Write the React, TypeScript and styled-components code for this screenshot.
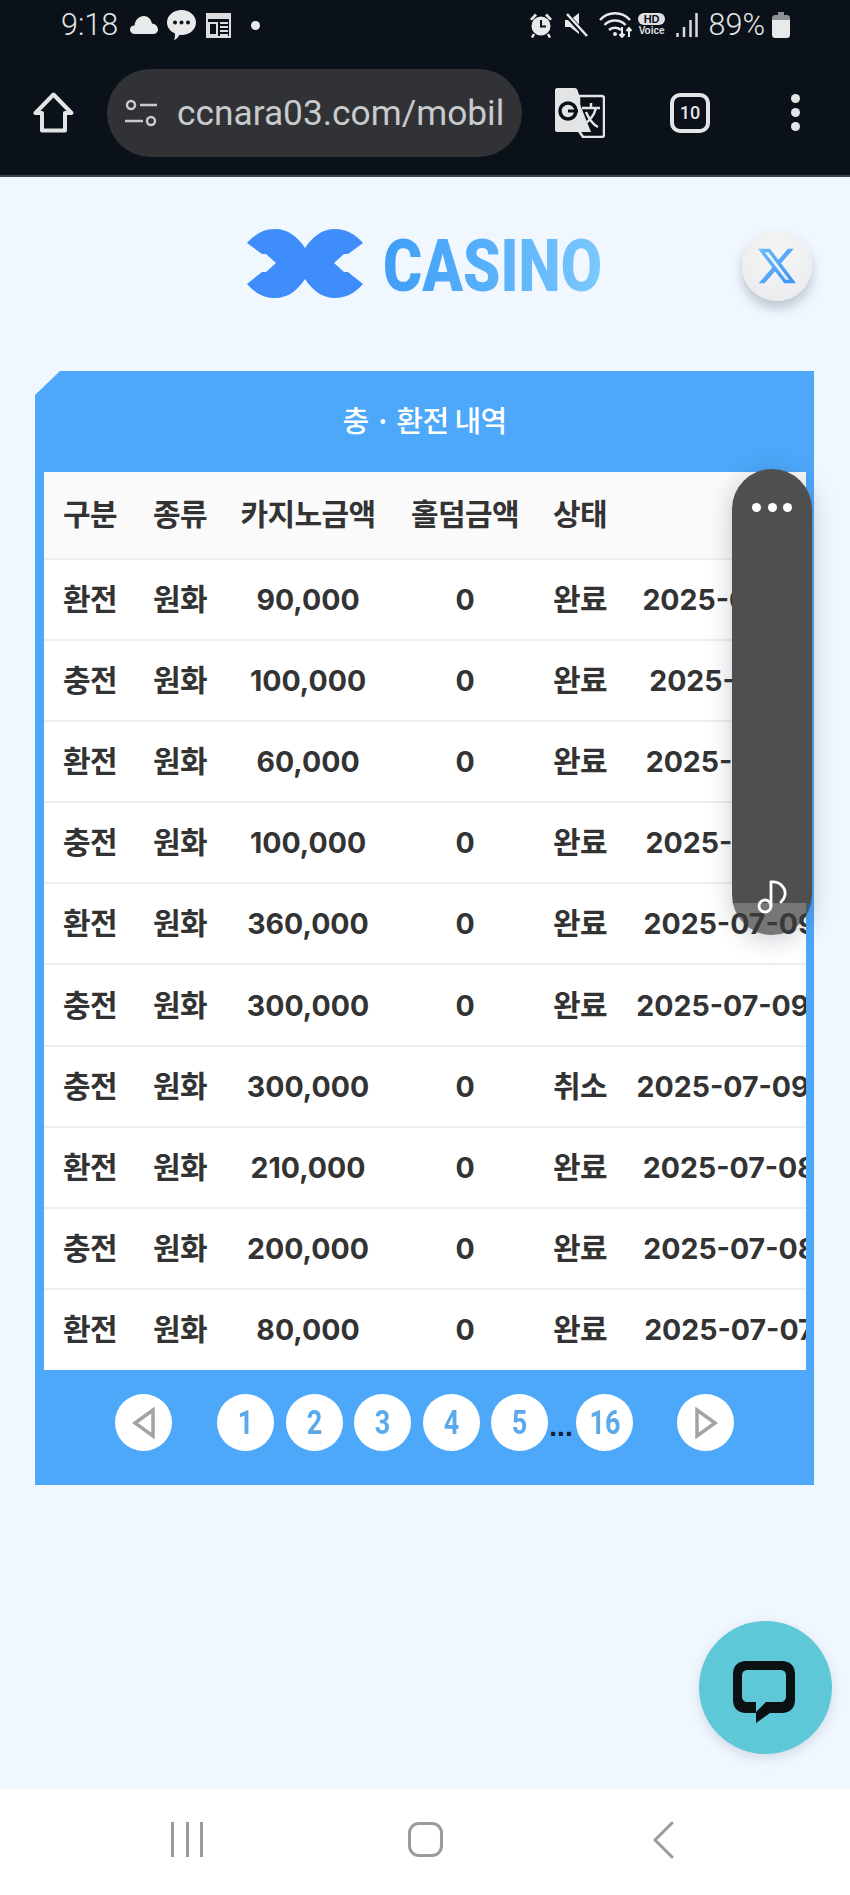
import React from "react";
import styled, { createGlobalStyle } from "styled-components";

const GlobalStyle = createGlobalStyle`
  html, body {
    margin: 0;
    padding: 0;
    background: #f1f7ff;
  }
  * {
    box-sizing: border-box;
  }
`;

const Screen = styled.div`
  position: relative;
  width: 850px;
  height: 1895px;
  overflow: hidden;
  display: flex;
  flex-direction: column;
  font-family: Inter, "Noto Sans CJK KR", sans-serif;
  background: #f1f7ff;
`;

const TopBars = styled.header`
  height: 177px;
  flex: none;
  background: #0b1119;
  border-bottom: 2px solid #3a4250;
  color: #e8e9ea;
`;

const StatusBar = styled.div`
  height: 50px;
  display: flex;
  align-items: center;
  justify-content: space-between;
  padding: 0 60px 0 61px;
`;

const StatusGroup = styled.div`
  display: flex;
  align-items: center;
  gap: ${(p: { $gap: number }) => p.$gap}px;
`;

const StatusText = styled.span`
  font-family: Roboto, sans-serif;
  font-weight: 300;
  font-size: 30.5px;
  line-height: 40px;
  color: #e4e5e6;
`;

const StatusDot = styled.span`
  width: 9px;
  height: 9px;
  margin-left: 8px;
  border-radius: 50%;
  background: #e8e9ea;
`;

const VoiceBadge = styled.div`
  width: 28px;
  display: flex;
  flex-direction: column;
  align-items: center;
  font-family: "Liberation Sans", sans-serif;
  font-weight: 700;
  color: #dfe0e1;
`;

const HdChip = styled.span`
  width: 27px;
  height: 12px;
  border-radius: 6px;
  background: #dfe0e1;
  color: #0b1119;
  font-size: 11px;
  line-height: 12px;
  text-align: center;
`;

const VoiceText = styled.span`
  font-size: 10px;
  line-height: 12px;
`;

const ToolBar = styled.div`
  height: 125px;
  display: flex;
  align-items: center;
  padding: 0 0 0 33px;
`;

const UrlPill = styled.div`
  width: 415px;
  height: 88px;
  margin-left: 33px;
  padding-left: 18px;
  display: flex;
  align-items: center;
  gap: 19px;
  border-radius: 44px;
  background: #303236;
`;

const UrlText = styled.span`
  font-family: Roboto, sans-serif;
  font-size: 35.3px;
  color: #c9cacc;
  white-space: nowrap;
`;

const TabCount = styled.div`
  width: 40px;
  height: 40px;
  margin-left: 65px;
  border: 4px solid #e3e4e6;
  border-radius: 10px;
  display: flex;
  align-items: center;
  justify-content: center;
  font-family: Roboto, sans-serif;
  font-weight: 500;
  font-size: 18px;
  color: #e3e4e6;
`;

const MoreDots = styled.div`
  margin-left: 81px;
  display: flex;
  flex-direction: column;
  gap: 5px;
`;

const MoreDot = styled.span`
  width: 9px;
  height: 9px;
  border-radius: 50%;
  background: #e3e4e6;
`;

const Page = styled.main`
  flex: 1;
  display: flex;
  flex-direction: column;
  padding-top: 52px;
`;

const LogoRow = styled.div`
  height: 70px;
  margin-bottom: 72px;
  display: flex;
  align-items: center;
  justify-content: center;
  gap: 19px;
  padding-right: 2px;
`;

const LogoMark = styled.svg`
  filter: blur(0.5px);
`;

const LogoWord = styled.span`
  display: inline-block;
  margin: 4px -48px 0 0;
  transform: scaleX(0.82);
  transform-origin: left center;
  font-family: Roboto, sans-serif;
  font-weight: 900;
  font-size: 73px;
  line-height: 70px;
  background: linear-gradient(90deg, #3f9ef6 0%, #5cb3fb 55%, #7cc8ff 100%);
  -webkit-background-clip: text;
  background-clip: text;
  color: transparent;
  filter: blur(0.6px);
`;

const Panel = styled.section`
  margin: 0 36px 0 35px;
  background: #4da8fa;
  clip-path: polygon(25px 0, 100% 0, 100% 100%, 0 100%, 0 24px);
`;

const PanelTitle = styled.h2`
  height: 101px;
  margin: 0;
  padding-bottom: 6px;
  display: flex;
  align-items: center;
  justify-content: center;
  font-family: "Noto Sans CJK KR", sans-serif;
  font-weight: 500;
  font-size: 29px;
  letter-spacing: -0.6px;
  color: #fff;
`;

const TableClip = styled.div`
  margin: 0 8px 0 9px;
  overflow: hidden;
  background: #fff;
`;

const HistoryTable = styled.table`
  width: 917px;
  table-layout: fixed;
  border-collapse: collapse;
  color: #333;
`;

const HeadRow = styled.tr`
  height: 87px;
  background: #fafafa;
  border-bottom: 2px solid #eee;
`;

const BodyRow = styled.tr`
  height: 81.1px;
  border-bottom: 2px solid #eee;
  &:last-child {
    border-bottom: 0;
  }
`;

const HeadCell = styled.th`
  padding: 0 0 6px;
  font-family: "Noto Sans CJK KR", sans-serif;
  font-size: 30px;
  font-weight: 700;
  letter-spacing: -0.6px;
  text-align: center;
  white-space: nowrap;
`;

const Cell = styled.td`
  padding: 0 0 5px;
  font-family: "Noto Sans CJK KR", sans-serif;
  font-size: 30px;
  font-weight: 700;
  letter-spacing: -0.6px;
  text-align: center;
  white-space: nowrap;
`;

const NumCell = styled.td`
  padding: 0;
  font-family: Inter, sans-serif;
  font-size: 28.5px;
  font-weight: 700;
  text-align: center;
  white-space: nowrap;
`;

const Pager = styled.nav`
  height: 115px;
  padding-bottom: 9px;
  display: flex;
  align-items: center;
  justify-content: center;
`;

const PageCircle = styled.span<{ $after?: number }>`
  width: 57px;
  height: 57px;
  flex: none;
  margin-right: ${(p) => p.$after ?? 11.5}px;
  border-radius: 50%;
  background: #fff;
  display: flex;
  align-items: center;
  justify-content: center;
`;

const PageNum = styled.span`
  display: inline-block;
  transform: scaleX(0.82);
  font-family: Roboto, sans-serif;
  font-weight: 700;
  font-size: 33px;
  color: #5aa9ea;
`;

const PageGap = styled.span`
  width: 26px;
  margin: 8px 2px 0 -11.5px;
  text-align: center;
  font-family: "Liberation Sans", sans-serif;
  font-size: 28px;
  line-height: 26px;
  font-weight: 700;
  color: #0b2038;
`;

const XButton = styled.div`
  position: absolute;
  left: 742px;
  top: 231px;
  width: 70px;
  height: 70px;
  border-radius: 50%;
  background: radial-gradient(circle at 50% 35%, #f6f6f7, #e8e9eb);
  box-shadow: 0 7px 12px rgba(90, 100, 115, 0.35);
  display: flex;
  align-items: center;
  justify-content: center;
`;

const FloatingPill = styled.div`
  position: absolute;
  left: 732px;
  top: 469px;
  width: 80px;
  height: 466px;
  border-radius: 40px;
  overflow: hidden;
  display: flex;
  flex-direction: column;
  box-shadow: 0 4px 24px rgba(40, 50, 70, 0.25);
`;

const PillBody = styled.div`
  flex: 1;
  padding-top: 34px;
  background: #4f4f4f;
  display: flex;
  justify-content: center;
  gap: 6.5px;
`;

const PillDot = styled.span`
  width: 9px;
  height: 9px;
  border-radius: 50%;
  background: #fff;
`;

const PillFoot = styled.div`
  height: 32px;
  flex: none;
  background: rgba(60, 60, 60, 0.7);
`;

const PillNote = styled.svg`
  position: absolute;
  left: 25px;
  top: 411px;
`;

const ChatButton = styled.div`
  position: absolute;
  left: 699px;
  top: 1621px;
  width: 133px;
  height: 133px;
  border-radius: 50%;
  background: #5fc8d8;
  box-shadow: 0 4px 12px rgba(60, 90, 110, 0.18);
  display: flex;
  align-items: center;
  justify-content: center;
`;

const NavBar = styled.footer`
  height: 106px;
  flex: none;
  background: #fff;
  display: flex;
  align-items: flex-start;
  padding: 33px 0 0 171px;
`;

const NavBars = styled.div`
  width: 32px;
  height: 35px;
  border-left: 3px solid #9b9b9f;
  border-right: 3px solid #9b9b9f;
  display: flex;
  justify-content: center;
`;

const NavBarMid = styled.span`
  width: 3px;
  background: #9b9b9f;
`;

const NavHome = styled.div`
  width: 35px;
  height: 35px;
  margin: 0 209px 0 205px;
  border: 3.5px solid #9b9b9f;
  border-radius: 11px;
`;

const rows = [
  ["환전", "90,000", "완료", "2025-07-10 21:40:38"],
  ["충전", "100,000", "완료", "2025-07-10 12:21:14"],
  ["환전", "60,000", "완료", "2025-07-10 09:41:18"],
  ["충전", "100,000", "완료", "2025-07-10 08:31:16"],
  ["환전", "360,000", "완료", "2025-07-09 21:41:28"],
  ["충전", "300,000", "완료", "2025-07-09 20:36:45"],
  ["충전", "300,000", "취소", "2025-07-09 20:35:42"],
  ["환전", "210,000", "완료", "2025-07-08 14:26:51"],
  ["충전", "200,000", "완료", "2025-07-08 13:21:56"],
  ["환전", "80,000", "완료", "2025-07-07 21:14:53"],
];

const Triangle = ({ flip }: { flip?: boolean }) => (
  <svg width="24" height="32" viewBox="0 0 24 32" style={flip ? { transform: "scaleX(-1)" } : undefined}>
    <path d="M21 3 L3 16 L21 29 Z" fill="none" stroke="#a3a3a3" strokeWidth="3.5" strokeLinejoin="miter" />
  </svg>
);

export default function App() {
  return (
    <Screen>
      <GlobalStyle />
      <TopBars>
        <StatusBar>
          <StatusGroup $gap={12}>
            <StatusText>9:18</StatusText>
            <svg width="28" height="18" viewBox="0 0 28 18">
              <path d="M5 18C2 18 0 16 0 13.500C0 11 2 9.500 4.500 9.500C5 4 9 0 14 0C18 0 21 3 22 7.500C25.500 8 28 10.500 28 13.500C28 16 26 18 23 18Z" fill="#e8e9ea" />
            </svg>
            <svg width="29" height="30" viewBox="0 0 29 30" style={{ marginLeft: -3 }}>
              <path d="M14.500 0C22.500 0 29 5.500 29 12.500C29 19.500 22.500 25 14.500 25C13.700 25 13 25 12.300 24.900C11.500 27 9.500 29 7 30C8 28 8.200 25.500 7.800 23.300C3 21.200 0 17.200 0 12.500C0 5.500 6.500 0 14.500 0Z" fill="#e8e9ea" />
              <circle cx="8" cy="12.500" r="2" fill="#0b1119" />
              <circle cx="14.500" cy="12.500" r="2" fill="#0b1119" />
              <circle cx="21" cy="12.500" r="2" fill="#0b1119" />
            </svg>
            <svg width="25" height="26" viewBox="0 0 25 26" style={{ marginLeft: -2 }}>
              <path d="M1 2H24V25H1Z" fill="none" stroke="#dcdddf" strokeWidth="2" />
              <path d="M1 1H24V7H1Z" fill="#dcdddf" />
              <path d="M3 11H11V23H3Z" fill="none" stroke="#dcdddf" strokeWidth="2" />
              <path d="M14 11H22M14 15H22M14 19H22M14 23H22" stroke="#dcdddf" strokeWidth="2" />
            </svg>
            <StatusDot />
          </StatusGroup>
          <StatusGroup $gap={11}>
            <svg width="24" height="26" viewBox="0 0 24 26">
              <circle cx="12" cy="14" r="9.500" fill="#e8e9ea" />
              <path d="M12 8V14.500H17" fill="none" stroke="#0b1119" strokeWidth="2" />
              <path d="M1 7 L6 1.500 L8 3.500 L3 8.500Z M23 7 L18 1.500 L16 3.500 L21 8.500Z" fill="#e8e9ea" />
              <path d="M5 22 L3 25.500M19 22 L21 25.500" stroke="#e8e9ea" strokeWidth="2.500" />
            </svg>
            <svg width="24" height="26" viewBox="0 0 24 26">
              <path d="M1 8H6L15 1V22L6 15H1Z" fill="#e8e9ea" />
              <path d="M2 2 L23 25" stroke="#0b1119" strokeWidth="5" />
              <path d="M3 2 L23 24" stroke="#e8e9ea" strokeWidth="2.500" />
            </svg>
            <svg width="34" height="26" viewBox="0 0 34 26" style={{ marginRight: -6 }}>
              <path d="M1 8C9 -1 23 -1 31 8M5.500 13C11 7 21 7 26.500 13M10 18C13 15 19 15 22 18" fill="none" stroke="#e8e9ea" strokeWidth="2.500" />
              <circle cx="16" cy="22" r="2" fill="#e8e9ea" />
              <path d="M23 15V25M20.500 22 L23 25 L25.500 22M30 25V16M27.500 19 L30 16 L32.500 19" fill="none" stroke="#e8e9ea" strokeWidth="2" />
            </svg>
            <VoiceBadge>
              <HdChip>HD</HdChip>
              <VoiceText>Voice</VoiceText>
            </VoiceBadge>
            <svg width="22" height="24" viewBox="0 0 22 24" style={{ marginLeft: -1 }}>
              <path d="M1.500 20V24M8 14V24M14.500 7V24M20.500 0V24" stroke="#d9dadc" strokeWidth="2.500" />
            </svg>
            <StatusText>89%</StatusText>
            <svg width="18" height="26" viewBox="0 0 18 26" style={{ marginLeft: -4 }}>
              <path d="M6 0H12V3H6Z" fill="#8f9093" />
              <path d="M3 3H15C16.500 3 18 4 18 6V8H0V6C0 4 1.500 3 3 3Z" fill="#8f9093" />
              <path d="M0 8H18V23C18 25 16.500 26 15 26H3C1.500 26 0 25 0 23Z" fill="#e8e9ea" />
            </svg>
          </StatusGroup>
        </StatusBar>
        <ToolBar>
          <svg width="41" height="41" viewBox="0 0 41 41">
            <path d="M20.500 2.500 L2.500 21 H9 V38.500 H32 V21 H38.500 Z" fill="none" stroke="#e3e4e6" strokeWidth="4" strokeLinejoin="round" />
          </svg>
          <UrlPill>
            <svg width="33" height="28" viewBox="0 0 33 28">
              <circle cx="6" cy="6" r="4" fill="none" stroke="#c9cacc" strokeWidth="2.500" />
              <path d="M15 6H32M0 22H18" stroke="#c9cacc" strokeWidth="2.500" />
              <circle cx="26" cy="22" r="4" fill="none" stroke="#c9cacc" strokeWidth="2.500" />
            </svg>
            <UrlText>ccnara03.com/mobil</UrlText>
          </UrlPill>
          <svg width="50" height="50" viewBox="0 0 50 50" style={{ marginLeft: 33 }}>
            <path d="M2 0H20C21 0 22 1 22.500 2 L36 44H2C1 44 0 43 0 42V2C0 1 1 0 2 0Z" fill="#e3e4e6" />
            <path d="M24 8H47C48 8 49 9 49 10V47C49 48 48 49 47 49H28L24 43Z" fill="#0b1119" stroke="#e3e4e6" strokeWidth="2.500" />
            <path d="M22 9 L36 44 H8 Z" fill="#e3e4e6" />
            <circle cx="13" cy="23" r="8" fill="none" stroke="#0b1119" strokeWidth="3.500" />
            <path d="M13 23H23" stroke="#0b1119" strokeWidth="3" />
            <path d="M27 20H45M36 15V20M41 20C39 28 33 34 28 37M31 24C34 31 39 37 43 39" fill="none" stroke="#e3e4e6" strokeWidth="2.500" />
          </svg>
          <TabCount>10</TabCount>
          <MoreDots>
            <MoreDot />
            <MoreDot />
            <MoreDot />
          </MoreDots>
        </ToolBar>
      </TopBars>
      <Page>
        <LogoRow>
          <LogoMark width="118" height="70" viewBox="0 0 118 70">
            <path
              d="M1 14 C9 5 18 0 29 0 C42 0 52 8 59 19 C66 8 76 0 89 0 C100 0 109 5 117 14 L102 25 L98 25 L88 34 L98 43 L102 43 L117 55 C109 64 100 69 89 69 C76 69 66 61 59 50 C52 61 42 69 29 69 C18 69 9 64 1 55 L16 43 L20 43 L30 34 L20 25 L16 25 Z"
              fill="#3f8cfb"
            />
          </LogoMark>
          <LogoWord>CASINO</LogoWord>
        </LogoRow>
        <Panel>
          <PanelTitle>충 · 환전 내역</PanelTitle>
          <TableClip>
            <HistoryTable>
              <colgroup>
                <col style={{ width: 92 }} />
                <col style={{ width: 88 }} />
                <col style={{ width: 168 }} />
                <col style={{ width: 146 }} />
                <col style={{ width: 84 }} />
                <col style={{ width: 339 }} />
              </colgroup>
              <thead>
                <HeadRow>
                  <HeadCell>구분</HeadCell>
                  <HeadCell>종류</HeadCell>
                  <HeadCell>카지노금액</HeadCell>
                  <HeadCell>홀덤금액</HeadCell>
                  <HeadCell>상태</HeadCell>
                  <HeadCell>일시</HeadCell>
                </HeadRow>
              </thead>
              <tbody>
                {rows.map((row, i) => (
                  <BodyRow key={i}>
                    <Cell>{row[0]}</Cell>
                    <Cell>원화</Cell>
                    <NumCell>{row[1]}</NumCell>
                    <NumCell>0</NumCell>
                    <Cell>{row[2]}</Cell>
                    <NumCell>{row[3]}</NumCell>
                  </BodyRow>
                ))}
              </tbody>
            </HistoryTable>
          </TableClip>
          <Pager>
            <PageCircle $after={45}>
              <Triangle />
            </PageCircle>
            {[1, 2, 3, 4, 5].map((n) => (
              <PageCircle key={n}>
                <PageNum>{n}</PageNum>
              </PageCircle>
            ))}
            <PageGap>...</PageGap>
            <PageCircle $after={44}>
              <PageNum>16</PageNum>
            </PageCircle>
            <PageCircle $after={0}>
              <Triangle flip />
            </PageCircle>
          </Pager>
        </Panel>
      </Page>
      <NavBar>
        <NavBars>
          <NavBarMid />
        </NavBars>
        <NavHome />
        <svg width="22" height="38" viewBox="0 0 22 38" style={{ marginTop: -1 }}>
          <path d="M20 2 L3 19 L20 36" fill="none" stroke="#9b9b9f" strokeWidth="3" strokeLinecap="round" strokeLinejoin="round" />
        </svg>
      </NavBar>
      <XButton>
        <svg width="40" height="38" viewBox="0 0 24 24">
          <defs>
            <linearGradient id="xBlue" x1="0" y1="0" x2="1" y2="1">
              <stop offset="0" stopColor="#6cbcf8" />
              <stop offset="1" stopColor="#3e93f7" />
            </linearGradient>
          </defs>
          <path
            d="M18.900 1.150h3.680l-8.040 9.190L24 22.850h-7.410l-5.800-7.580-6.640 7.580H.470l8.600-9.830L0 1.150h7.590l5.240 6.930zM17.600 20.640h2.040L6.490 3.240H4.300z"
            fill="url(#xBlue)"
          />
        </svg>
      </XButton>
      <FloatingPill>
        <PillBody>
          <PillDot />
          <PillDot />
          <PillDot />
        </PillBody>
        <PillFoot />
        <PillNote width="30" height="35" viewBox="0 0 30 35">
          <circle cx="8" cy="26" r="6" fill="none" stroke="#fff" strokeWidth="2.800" />
          <path d="M14 26V2C23 1 29 8 28 15C27.600 18 26 20 24 22" fill="none" stroke="#fff" strokeWidth="2.800" strokeLinecap="round" />
        </PillNote>
      </FloatingPill>
      <ChatButton>
        <svg width="62" height="62" viewBox="0 0 62 62" style={{ marginTop: 8, marginLeft: -4 }}>
          <path
            d="M13 0H49C57 0 62 5 62 13V39C62 47 57 52 49 52H37L23 62V52H13C5 52 0 47 0 39V13C0 5 5 0 13 0ZM15 9C11 9 9 11 9 15V35C9 39 11 41 15 41H23V51L33 41H47C51 41 53 39 53 35V15C53 11 51 9 47 9Z"
            fill="#0b1113"
            fillRule="evenodd"
          />
        </svg>
      </ChatButton>
    </Screen>
  );
}
